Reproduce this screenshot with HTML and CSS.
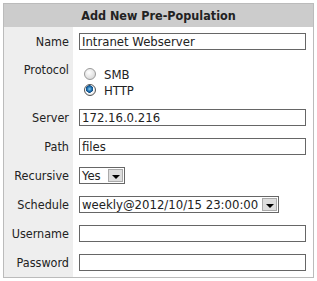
FILE: index.html
```html
<!DOCTYPE html>
<html lang="en">
<head>
    <meta charset="UTF-8">
    <title>Add New Pre-Population</title>
    <link rel="stylesheet" href="styles.css">
</head>
<body>
    <table class="form">
        <tr><th colspan="2">Add New Pre-Population</th></tr>
        <tr>
            <td class="label">Name</td>
            <td class="field"><input type="text" class="text" value="Intranet Webserver"></td>
        </tr>
        <tr class="tall">
            <td class="label top">Protocol</td>
            <td class="field">
                <div class="radios">
                    <label><input type="radio" name="protocol"> SMB</label>
                    <label><input type="radio" name="protocol" checked> HTTP</label>
                </div>
            </td>
        </tr>
        <tr>
            <td class="label">Server</td>
            <td class="field"><input type="text" class="text" value="172.16.0.216"></td>
        </tr>
        <tr>
            <td class="label">Path</td>
            <td class="field"><input type="text" class="text" value="files"></td>
        </tr>
        <tr>
            <td class="label">Recursive</td>
            <td class="field">
                <div class="select small"><span class="value">Yes</span><span class="arrow"></span></div>
            </td>
        </tr>
        <tr>
            <td class="label">Schedule</td>
            <td class="field">
                <div class="select wide"><span class="value">weekly@2012/10/15 23:00:00</span><span class="arrow"></span></div>
            </td>
        </tr>
        <tr>
            <td class="label">Username</td>
            <td class="field"><input type="text" class="text"></td>
        </tr>
        <tr>
            <td class="label">Password</td>
            <td class="field"><input type="password" class="text"></td>
        </tr>
    </table>
</body>
</html>
```

FILE: styles.css
```css
body {
    margin: 3px;
    font-family: "DejaVu Sans Condensed", Tahoma, "Liberation Sans", sans-serif;
    font-size: 13px;
    color: #222;
    background: #fff;
}
.form {
    width: 311px;
    border: 1px solid #bbb;
    border-collapse: separate;
    border-spacing: 0;
}
.form th {
    height: 23px;
    padding: 0;
    background: #ccc;
    font-size: 12.5px;
    font-weight: bold;
    text-align: center;
}
.form td {
    height: 29px;
    padding: 0;
}
.label {
    width: 65px;
    padding-right: 4px !important;
    background: #eee;
    font-size: 12.5px;
    text-align: right;
    white-space: nowrap;
}
.label.top {
    vertical-align: top;
    padding-top: 6px !important;
}
.field {
    padding-left: 6px !important;
}
.tall td {
    height: 41px;
}
.text {
    box-sizing: border-box;
    width: 227px;
    height: 17px;
    margin: 0;
    padding: 0 2px;
    border: 1px solid #666;
    font: inherit;
    color: #222;
    display: block;
}
.radios {
    padding: 9px 0 4px 4px;
}
.radios label {
    display: flex;
    align-items: center;
    height: 16px;
}
.radios input {
    appearance: none;
    width: 12px;
    height: 12px;
    margin: 0 8px 0 1px;
    border: 1px solid #999;
    border-radius: 50%;
    background: radial-gradient(circle at 40% 35%, #fff, #ddd 70%);
}
.radios input:checked {
    border-color: #555;
    background: radial-gradient(circle at 45% 40%, #8fd0f0 0, #2a7ab8 2px, #0b4c86 3.5px, #fff 4px, #e4e4e4 6px);
}
.select {
    box-sizing: border-box;
    display: flex;
    align-items: center;
    height: 17px;
    border: 1px solid #666;
    background: #fff;
}
.select.small {
    width: 46px;
}
.select.wide {
    width: 200px;
}
.select .value {
    flex: 1;
    padding-left: 2px;
    white-space: nowrap;
}
.select .arrow {
    position: relative;
    width: 15px;
    height: 13px;
    margin-right: 1px;
    background: #ddd;
    border: 1px solid #aaa;
    box-sizing: border-box;
}
.select .arrow::after {
    content: "";
    position: absolute;
    left: 3px;
    top: 5px;
    border-left: 4px solid transparent;
    border-right: 4px solid transparent;
    border-top: 4px solid #000;
}
```
